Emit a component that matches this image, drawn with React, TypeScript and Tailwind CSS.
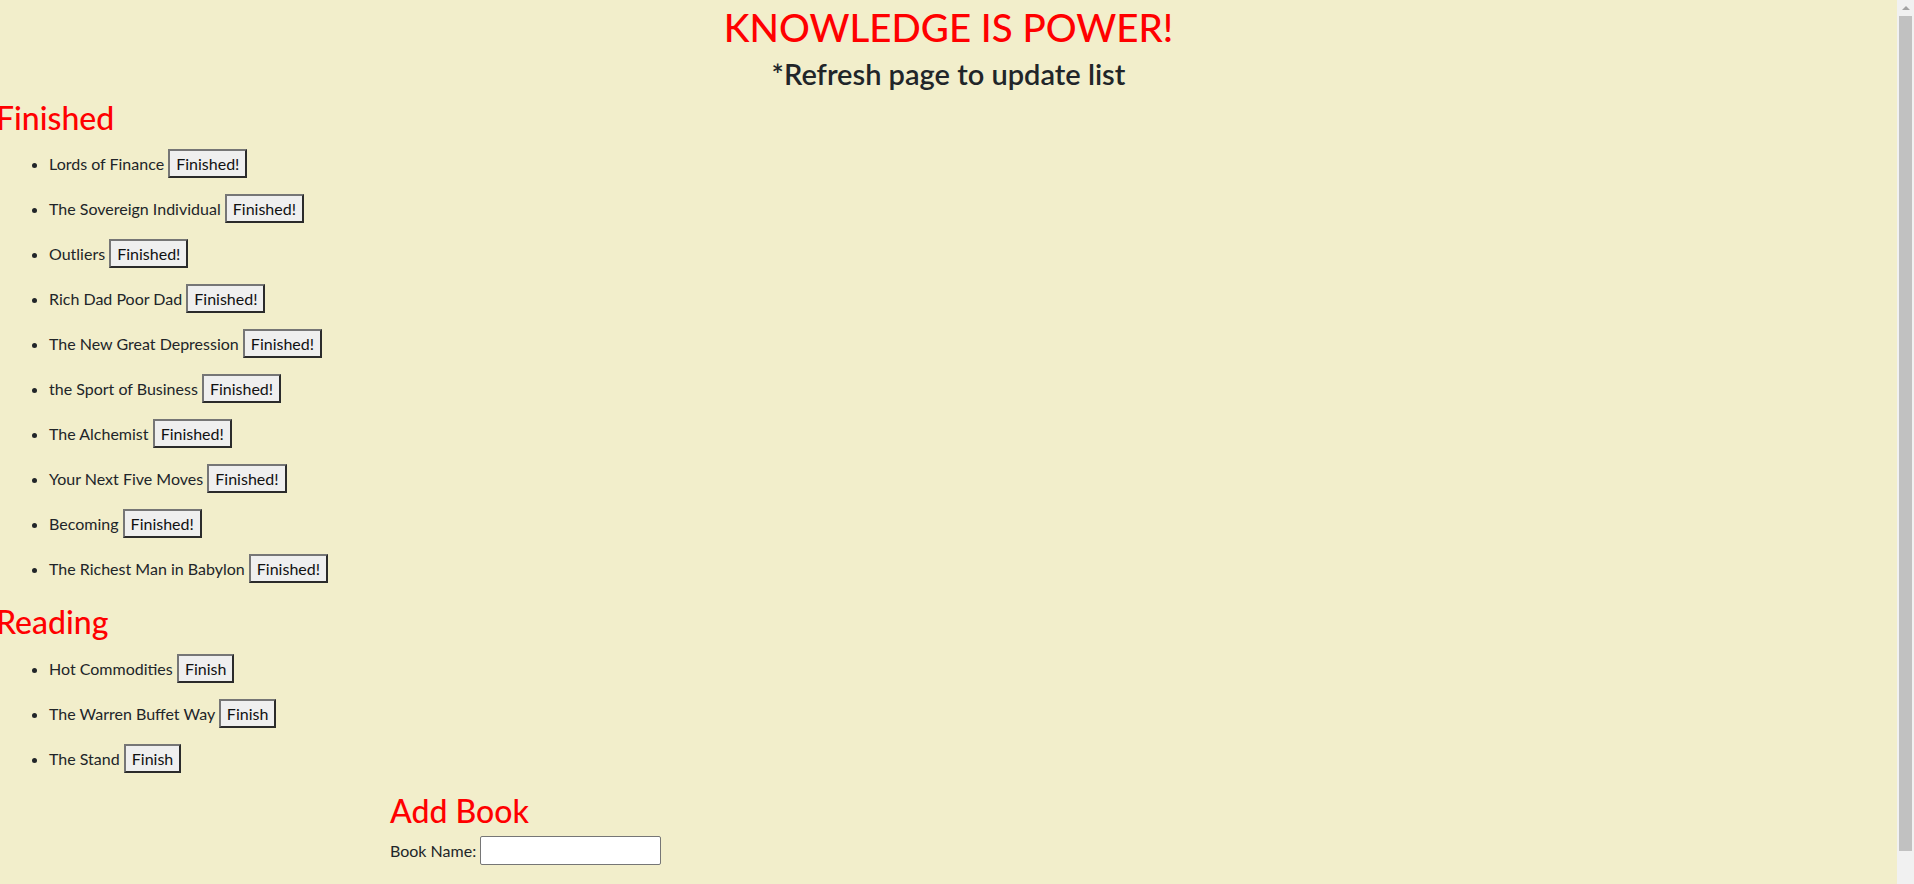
const finished = [
  "Lords of Finance",
  "The Sovereign Individual",
  "Outliers",
  "Rich Dad Poor Dad",
  "The New Great Depression",
  "the Sport of Business",
  "The Alchemist",
  "Your Next Five Moves",
  "Becoming",
  "The Richest Man in Babylon",
];

const reading = ["Hot Commodities", "The Warren Buffet Way", "The Stand"];

function BookItem({ title, label }: { title: string; label: string }) {
  return (
    <li className="h-[45px] leading-[29px]">
      {title}{" "}
      <button className="inline-block h-[29px] px-[6px] align-top border-2 border-t-[#767676] border-l-[#767676] border-r-[#2b2b2b] border-b-[#2b2b2b] bg-[#efefef] text-[#111] leading-[25px]">
        {label}
      </button>
    </li>
  );
}

export default function App() {
  return (
    <div className="flex h-[884px] overflow-hidden bg-[#f2eecb] text-[#212529] text-[16px] font-['Lato','Noto_Sans',sans-serif]">
      <main className="flex-1">
        {/* Header */}
        <div className="text-center">
          <h1 className="pt-[3px] mb-[6px] text-[38.5px] leading-[48px] font-medium text-[#ff0000]">KNOWLEDGE IS POWER!</h1>
          <h3 className="text-[29px] leading-[34px] font-semibold">*Refresh page to update list</h3>
        </div>

        {/* Finished list */}
        <h2 className="ml-[-4px] mt-[8px] text-[32px] leading-[38px] font-medium text-[#ff0000]">Finished</h2>
        <ul className="list-disc pl-[49px] pt-[12px]">
          {finished.map((b) => (
            <BookItem key={b} title={b} label="Finished!" />
          ))}
        </ul>

        {/* Reading list */}
        <h2 className="ml-[-4px] mt-[4px] text-[32px] leading-[38px] font-medium text-[#ff0000]">Reading</h2>
        <ul className="list-disc pl-[49px] pt-[13px]">
          {reading.map((b) => (
            <BookItem key={b} title={b} label="Finish" />
          ))}
        </ul>

        {/* Add book form */}
        <div className="pl-[390px]">
          <h2 className="mt-[3px] text-[32px] leading-[38px] font-medium text-[#ff0000]">Add Book</h2>
          <label className="flex items-center gap-[4px] mt-[6px]">
            Book Name:
            <input className="w-[181px] h-[29px] bg-white border border-[#767676] rounded-[2px]" />
          </label>
        </div>
      </main>

      {/* Scrollbar */}
      <div className="w-[17px] h-[884px] bg-[#f1f1f1] flex flex-col items-center">
        <div className="h-[16px] flex items-center justify-center">
          <div className="w-0 h-0 border-l-[4px] border-r-[4px] border-b-[4px] border-l-transparent border-r-transparent border-b-[#a3a3a3]" />
        </div>
        <div className="w-[13px] h-[835px] bg-[#c1c1c1]" />
      </div>
    </div>
  );
}
